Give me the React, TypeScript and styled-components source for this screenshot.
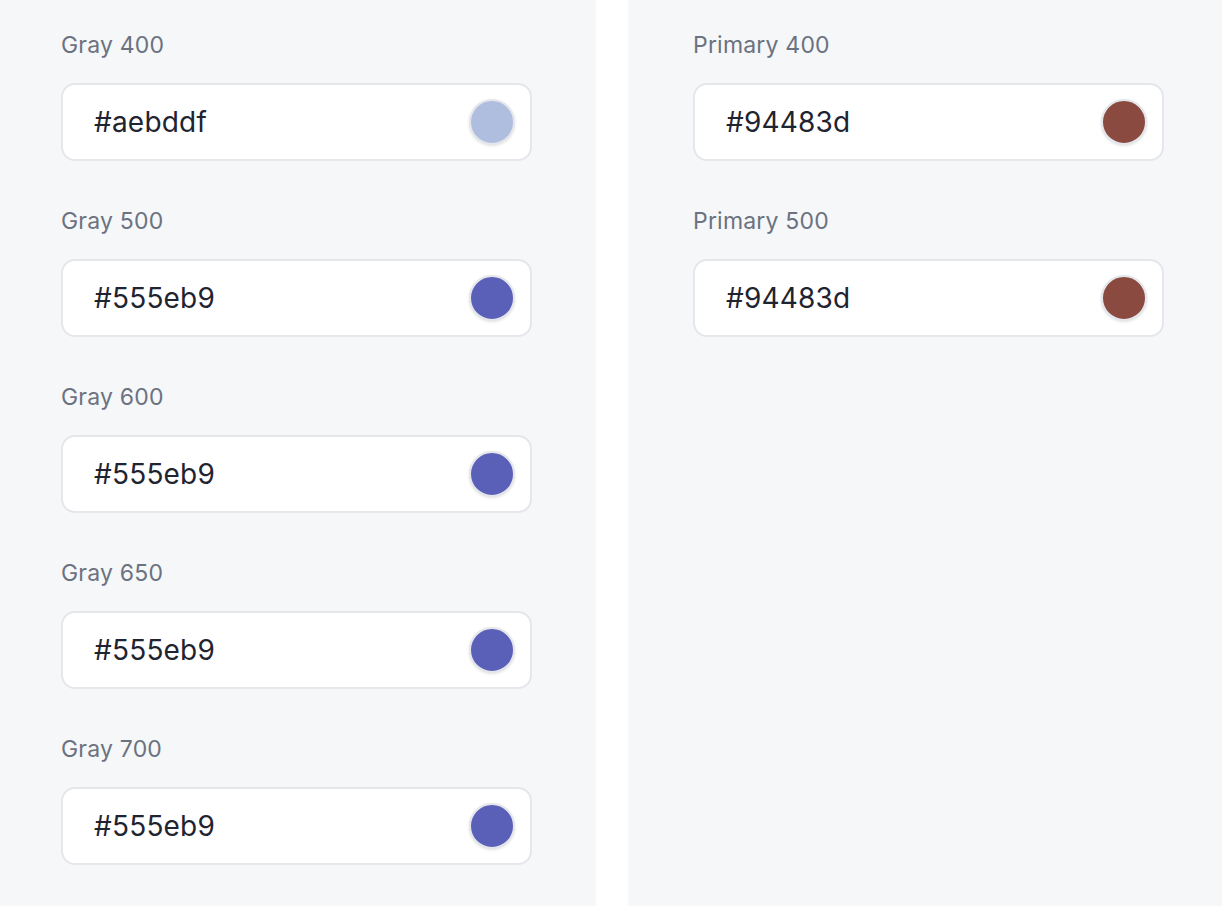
import styled, { createGlobalStyle } from "styled-components";

const GlobalStyle = createGlobalStyle`
  html, body {
    margin: 0;
    padding: 0;
    background: #ffffff;
    font-family: Inter, "Noto Sans", sans-serif;
  }
`;

const Page = styled.div`
  display: flex;
  gap: 32px;
  width: 1222px;
  height: 906px;
  overflow: hidden;
`;

const Panel = styled.div<{ $padLeft: number; $width: number }>`
  box-sizing: border-box;
  width: ${(p) => p.$width}px;
  height: 100%;
  background: #f6f7f9;
  padding: 30px 0 0 ${(p) => p.$padLeft}px;
  display: flex;
  flex-direction: column;
  gap: 45px;
`;

const Field = styled.div`
  display: flex;
  flex-direction: column;
  gap: 23px;
`;

const Label = styled.label`
  font-size: 23px;
  line-height: 30px;
  color: #6b7280;
  letter-spacing: 0.2px;
`;

const ColorBox = styled.div`
  box-sizing: border-box;
  width: 471px;
  height: 78px;
  background: #ffffff;
  border: 2px solid #e5e7eb;
  border-radius: 14px;
  display: flex;
  align-items: center;
  justify-content: space-between;
  padding: 0 15px 0 31px;
`;

const Value = styled.span`
  font-size: 28px;
  color: #1f2430;
  letter-spacing: 0.2px;
`;

const Swatch = styled.span<{ $color: string }>`
  box-sizing: border-box;
  width: 46px;
  height: 46px;
  border-radius: 50%;
  background: ${(p) => p.$color};
  border: 2px solid #e4e6ec;
  box-shadow: 0 1px 3px rgba(0, 0, 0, 0.12);
`;

const left = [
  { name: "Gray 400", value: "#aebddf", shade: "#afbddf" },
  { name: "Gray 500", value: "#555eb9", shade: "#5a5fb8" },
  { name: "Gray 600", value: "#555eb9", shade: "#5a5fb8" },
  { name: "Gray 650", value: "#555eb9", shade: "#5a5fb8" },
  { name: "Gray 700", value: "#555eb9", shade: "#5a5fb8" },
];

const right = [
  { name: "Primary 400", value: "#94483d", shade: "#8a4a3f" },
  { name: "Primary 500", value: "#94483d", shade: "#8a4a3f" },
];

function ColorField({ name, value, shade }: { name: string; value: string; shade: string }) {
  return (
    <Field>
      <Label>{name}</Label>
      <ColorBox>
        <Value>{value}</Value>
        <Swatch $color={shade} />
      </ColorBox>
    </Field>
  );
}

export default function App() {
  return (
    <>
      <GlobalStyle />
      <Page>
        <Panel $padLeft={61} $width={596}>
          {left.map((c) => (
            <ColorField key={c.name} {...c} />
          ))}
        </Panel>
        <Panel $padLeft={65} $width={594}>
          {right.map((c) => (
            <ColorField key={c.name} {...c} />
          ))}
        </Panel>
      </Page>
    </>
  );
}
